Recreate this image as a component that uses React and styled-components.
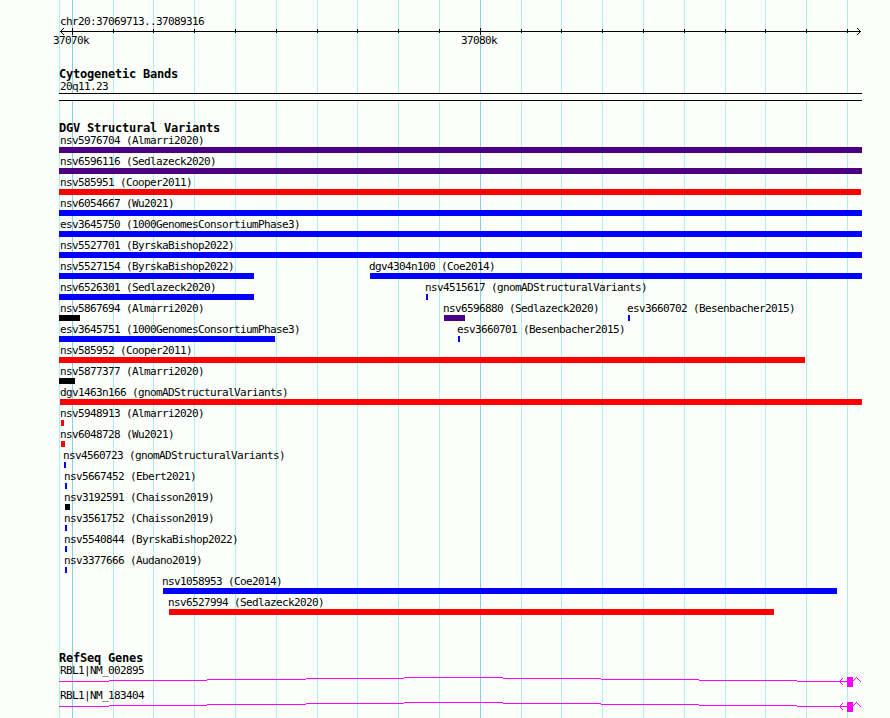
import styled, { createGlobalStyle } from 'styled-components';

const LEFT = 59;
const RIGHT = 862;

const minorLines = [59, 113, 153, 194, 235, 276, 317, 357, 398, 439, 521, 561, 602, 643, 684, 725, 765, 806, 847];
const majorLines = [
    { x: 72, label: '37070k' },
    { x: 480, label: '37080k' },
];

const colors = {
    purple: '#4b0082',
    red: '#ff0000',
    blue: '#0000ff',
    black: '#000000',
};

const variants = [
    [{ name: 'nsv5976704 (Almarri2020)', start: 59, end: 862, color: 'purple' }],
    [{ name: 'nsv6596116 (Sedlazeck2020)', start: 59, end: 862, color: 'purple' }],
    [{ name: 'nsv585951 (Cooper2011)', start: 59, end: 861, color: 'red' }],
    [{ name: 'nsv6054667 (Wu2021)', start: 59, end: 862, color: 'blue' }],
    [{ name: 'esv3645750 (1000GenomesConsortiumPhase3)', start: 59, end: 862, color: 'blue' }],
    [{ name: 'nsv5527701 (ByrskaBishop2022)', start: 59, end: 862, color: 'blue' }],
    [
        { name: 'nsv5527154 (ByrskaBishop2022)', start: 59, end: 254, color: 'blue' },
        { name: 'dgv4304n100 (Coe2014)', start: 370, end: 862, color: 'blue' },
    ],
    [
        { name: 'nsv6526301 (Sedlazeck2020)', start: 59, end: 254, color: 'blue' },
        { name: 'nsv4515617 (gnomADStructuralVariants)', start: 426, end: 428, color: 'blue' },
    ],
    [
        { name: 'nsv5867694 (Almarri2020)', start: 59, end: 80, color: 'black' },
        { name: 'nsv6596880 (Sedlazeck2020)', start: 444, end: 465, color: 'purple' },
        { name: 'esv3660702 (Besenbacher2015)', start: 628, end: 630, color: 'blue' },
    ],
    [
        { name: 'esv3645751 (1000GenomesConsortiumPhase3)', start: 59, end: 275, color: 'blue' },
        { name: 'esv3660701 (Besenbacher2015)', start: 458, end: 460, color: 'blue' },
    ],
    [{ name: 'nsv585952 (Cooper2011)', start: 59, end: 805, color: 'red' }],
    [{ name: 'nsv5877377 (Almarri2020)', start: 59, end: 75, color: 'black' }],
    [{ name: 'dgv1463n166 (gnomADStructuralVariants)', start: 60, end: 862, color: 'red' }],
    [{ name: 'nsv5948913 (Almarri2020)', start: 61, end: 64, color: 'red' }],
    [{ name: 'nsv6048728 (Wu2021)', start: 61, end: 65, color: 'red' }],
    [{ name: 'nsv4560723 (gnomADStructuralVariants)', start: 64, end: 66, color: 'blue' }],
    [{ name: 'nsv5667452 (Ebert2021)', start: 65, end: 67, color: 'blue' }],
    [{ name: 'nsv3192591 (Chaisson2019)', start: 65, end: 70, color: 'black' }],
    [{ name: 'nsv3561752 (Chaisson2019)', start: 65, end: 67, color: 'blue' }],
    [{ name: 'nsv5540844 (ByrskaBishop2022)', start: 65, end: 67, color: 'blue' }],
    [{ name: 'nsv3377666 (Audano2019)', start: 65, end: 67, color: 'blue' }],
    [{ name: 'nsv1058953 (Coe2014)', start: 163, end: 837, color: 'blue' }],
    [{ name: 'nsv6527994 (Sedlazeck2020)', start: 169, end: 774, color: 'red' }],
];

const genes = ['RBL1|NM_002895', 'RBL1|NM_183404'];

// x where each step of the intron line begins, and its height in the glyph
const intron = [[59, 4], [109, 3], [207, 2], [306, 1], [404, 0], [503, 1], [601, 2], [699, 3], [797, 4], [847, 4]];

function Grid() {
    return (
        <GridLines width="890" height="718" shapeRendering="crispEdges">
            {minorLines.map((x) => <rect key={x} x={x} y="0" width="1" height="718" fill="#afeeee" />)}
            {majorLines.map(({ x }) => <rect key={x} x={x} y="0" width="1" height="718" fill="#87ceeb" />)}
        </GridLines>
    )
}

function Ruler() {
    return (
        <RulerTrack>
            <Label>chr20:37069713..37089316</Label>
            <Glyph width={RIGHT - LEFT} height="6" viewBox={`${LEFT} 0 ${RIGHT - LEFT} 6`} shapeRendering="crispEdges">
                <rect x="60" y="3" width="801" height="1" />
                {minorLines.slice(1).map((x) => <rect key={x} x={x} y="1" width="1" height="4" />)}
                {majorLines.map(({ x }) => <rect key={x} x={x} y="0" width="1" height="7" />)}
                {[1, 2, 3].map((d) => (
                    <g key={d}>
                        <rect x={60 + d} y={3 - d} width="1" height="1" />
                        <rect x={60 + d} y={3 + d} width="1" height="1" />
                        <rect x={860 - d} y={3 - d} width="1" height="1" />
                        <rect x={860 - d} y={3 + d} width="1" height="1" />
                    </g>
                ))}
            </Glyph>
            <Row>
                {majorLines.map(({ x, label }) => <TickLabel key={x} $at={x - LEFT}>{label}</TickLabel>)}
            </Row>
        </RulerTrack>
    )
}

function Variant({ name, start, end, color }) {
    return (
        <Feature $at={start - LEFT}>
            <Label $shift={Math.max(60, start - 1) - start}>{name}</Label>
            <Bar $length={end - start} $color={colors[color]} />
        </Feature>
    )
}

function Gene({ name }) {
    return (
        <GeneRow>
            <Label>{name}</Label>
            <Glyph width={RIGHT - LEFT} height="10" viewBox={`${LEFT} 0 ${RIGHT - LEFT} 10`} fill="#ff00ff" shapeRendering="crispEdges">
                {intron.slice(0, -1).map(([x, y], i) => (
                    <rect key={x} x={x} y={y} width={intron[i + 1][0] - x} height="1" />
                ))}
                {[1, 2, 3].map((d) => (
                    <g key={d}>
                        <rect x={839 + d} y={4 - d} width="1" height="1" />
                        <rect x={839 + d} y={4 + d} width="1" height="1" />
                    </g>
                ))}
                <rect x="847" y="0" width="6" height="10" />
                {[3, 2, 1, 0, 1, 2, 3, 4].map((y, i) => (
                    <rect key={i} x={853 + i} y={y} width="1" height="1" />
                ))}
            </Glyph>
        </GeneRow>
    )
}

export default function App() {
    return (
        <Page>
            <GlobalStyle />
            <Grid />
            <Tracks>
                <Ruler />
                <Track $gap={20}>
                    <Title>Cytogenetic Bands</Title>
                    <Label>20q11.23</Label>
                    <Band />
                </Track>
                <Track $gap={20}>
                    <Title>DGV Structural Variants</Title>
                    {variants.map((row) => (
                        <Row key={row[0].name}>
                            {row.map((v) => <Variant key={v.name} {...v} />)}
                        </Row>
                    ))}
                </Track>
                <Track $gap={34}>
                    <Title>RefSeq Genes</Title>
                    {genes.map((name) => <Gene key={name} name={name} />)}
                </Track>
            </Tracks>
        </Page>
    )
}

const GlobalStyle = createGlobalStyle`
    body {
        margin: 0;
        background: #fdfffc;
    }
`

const Page = styled.div`
    position: relative;
    width: 890px;
    height: 718px;
    overflow: hidden;
    color: #000;
    font-family: "DejaVu Sans Mono", "Liberation Mono", monospace;
`

const GridLines = styled.svg`
    position: absolute;
    top: 0;
    left: 0;
`

const Tracks = styled.main`
    position: relative;
    display: flex;
    flex-direction: column;
    padding-left: ${LEFT}px;
    width: ${RIGHT - LEFT}px;
`

const RulerTrack = styled.header`
    display: flex;
    flex-direction: column;
    padding-top: 15px;
`

const Track = styled.section`
    display: flex;
    flex-direction: column;
    margin-top: ${({ $gap }) => $gap}px;
`

const Title = styled.h2`
    height: 13px;
    margin: 0;
    font-size: 12px;
    font-weight: bold;
    line-height: 15px;
    letter-spacing: -0.224px;
    white-space: pre;
`

const Label = styled.div`
    height: 13px;
    margin-left: ${({ $shift = 1 }) => $shift}px;
    font-size: 11px;
    line-height: 13px;
    letter-spacing: -0.622px;
    white-space: pre;
`

// every item sits in the same cell and is pushed right by its own start
const Row = styled.div`
    display: grid;
    grid-template-columns: 100%;
    justify-items: start;
`

const Feature = styled.div`
    grid-area: 1 / 1;
    margin-left: ${({ $at }) => $at}px;
    padding-bottom: 2px;
`

const TickLabel = styled(Label)`
    grid-area: 1 / 1;
    width: 36px;
    margin-left: ${({ $at }) => $at - 19}px;
`

const Bar = styled.div`
    width: ${({ $length }) => $length}px;
    height: 6px;
    background: ${({ $color }) => $color};
`

const Band = styled.div`
    box-sizing: border-box;
    height: 8px;
    border-top: 1px solid #000;
    border-bottom: 1px solid #000;
    background: #fdfffc;
`

const GeneRow = styled.div`
    padding-bottom: 2px;
`

const Glyph = styled.svg`
    display: block;
    overflow: visible;
`
